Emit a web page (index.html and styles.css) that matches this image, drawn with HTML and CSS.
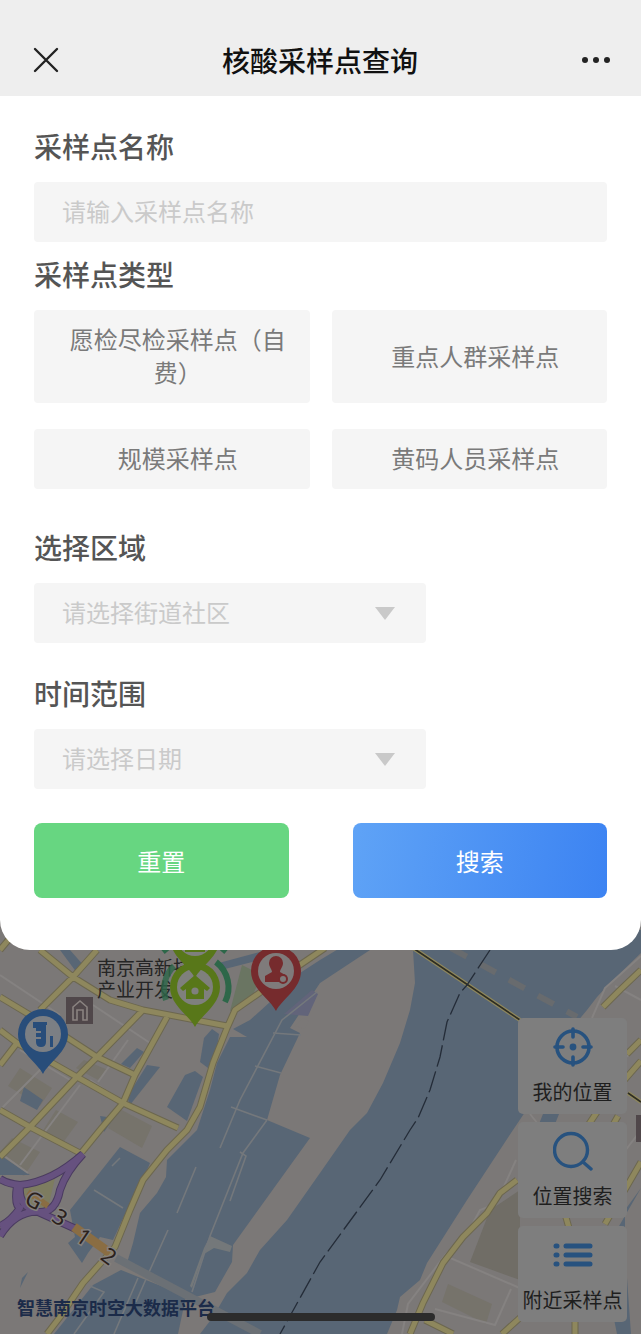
FILE: index.html
```html
<!DOCTYPE html>
<html lang="zh-CN">
<head>
    <meta charset="UTF-8">
    <meta name="viewport" content="width=device-width, initial-scale=1.0">
    <title>核酸采样点查询</title>
    <link rel="stylesheet" href="styles.css">
</head>
<body>
    <header class="navbar">
        <button class="nav-btn" type="button" aria-label="关闭">
            <svg width="26" height="26" viewBox="0 0 26 26" fill="none" stroke="#222" stroke-width="2.4" stroke-linecap="round"><path d="M2 2l22 22M24 2L2 24"/></svg>
        </button>
        <h1>核酸采样点查询</h1>
        <button class="nav-btn" type="button" aria-label="更多">
            <svg width="30" height="8" viewBox="0 0 30 8" fill="#222"><circle cx="4" cy="4" r="3"/><circle cx="15" cy="4" r="3"/><circle cx="26" cy="4" r="3"/></svg>
        </button>
    </header>

    <form class="sheet">
        <div class="field">
            <label class="field-title" for="siteName">采样点名称</label>
            <input class="control" type="text" id="siteName" placeholder="请输入采样点名称">
        </div>

        <div class="field field-types" role="group" aria-labelledby="typeTitle">
            <h2 class="field-title" id="typeTitle">采样点类型</h2>
            <div class="types">
                <button class="type-btn" type="button">愿检尽检采样点（自费）</button>
                <button class="type-btn" type="button">重点人群采样点</button>
                <button class="type-btn" type="button">规模采样点</button>
                <button class="type-btn" type="button">黄码人员采样点</button>
            </div>
        </div>

        <div class="field field-area">
            <label class="field-title" for="area">选择区域</label>
            <div class="select">
                <select class="control" id="area">
                    <option>请选择街道社区</option>
                </select>
                <svg class="arrow" width="20" height="13" viewBox="0 0 20 13"><path d="M0 0h20L10 13z" fill="#c9c9c9"/></svg>
            </div>
        </div>

        <div class="field field-date">
            <label class="field-title" for="date">时间范围</label>
            <div class="select">
                <select class="control" id="date">
                    <option>请选择日期</option>
                </select>
                <svg class="arrow" width="20" height="13" viewBox="0 0 20 13"><path d="M0 0h20L10 13z" fill="#c9c9c9"/></svg>
            </div>
        </div>

        <div class="actions">
            <button class="action reset" type="reset">重置</button>
            <button class="action search" type="button">搜索</button>
        </div>
    </form>

    <main class="map">
        <svg class="map-canvas" viewBox="0 920 641 414" preserveAspectRatio="xMidYMid slice" role="img" aria-label="地图">
            <rect y="920" width="641" height="414" fill="#7b7877"/>

            <!-- blocks -->
            <g fill="#76736b">
                <path d="M20 1068l32 20-12 18-32-20z"/>
                <path d="M118 1108l34 18-10 22-34-20z"/>
                <path d="M12 1138l28 14-16 24-24-12v-12z"/>
                <path d="M56 1110l22 12-16 22-20-12z"/>
                <path d="M84 1060l24 10-10 10-22-12z"/>
                <path d="M490 1210l30-20v90l-50-18z" fill="#706d66"/>
                <path d="M448 1284l44 20-6 20-44-22z"/>
            </g>
            <path d="M242 965l20 10-12 26-20 10z" fill="#6a7562"/>

            <!-- water -->
            <g fill="#586675">
                <path d="M413 930L413 950 415 983 410 1010 400 1043 383 1083 367 1113 350 1130 320 1173 287 1220 260 1250 247 1273 227 1293 213 1317 200 1334H387L397 1310 400 1297 420 1280 427 1263 467 1200 513 1130 560 1060 577 1022 587 1010 597 997 610 983 641 953V930z"/>
                <path d="M345 945L320 960 300 973 280 993 250 1020 233 1029 247 1037 230 1037 217 1063 210 1090 197 1130 167 1160 166 1177 157 1193 140 1213 133 1243 127 1263 145 1275 195 1297 215 1292 232 1262 233 1245 310 1138 267 1120 280 1075 300 1033 290 1028 320 983 370 950z"/>
                <path d="M120 1147l30 16-7 17-10 17-20 43-13-3-12 16-6 10-14-20 7-6-5-27z"/>
                <path d="M93 1285l28-15 65 26-8 38H54z"/>
                <path d="M212 1029l7 5-2 14-9 20-8-6 4-24z"/>
                <path d="M147 1065l13 2-30 38-3-8z"/>
                <path d="M185 1075l10-4 8 6-16 44-20-14z"/>
                <path d="M24 1087l19 13-6 10-17-9z"/>
                <path d="M60 950h10l15 17-8 6z"/>
                <path d="M137 1048l7 4-14 16-9-4z"/>
                <path d="M100 1116l14 2-10 14z"/>
                <path d="M215 964l60-16v8l-54 14z"/>
                <path d="M0 1155l30 20H0z"/>
                <path d="M28 1272l-8 16 2-10z"/>
                <path d="M543 1114h16l-4 10h-16z"/>
                <path d="M641 1188l-16 22v40l6 84h-14l-6-30V1240z"/>
            </g>
            <path d="M312 990l6 4-10 22-24-2z" fill="#62647a"/>
            <path d="M303 1018l6 3-4 8-10-3z" fill="#7b7877"/>
            <path d="M204 1248l6-12 22 10-2 6-16-4-10 6-12 34-2-2z" fill="#74787a"/>

            <!-- dykes and small streets -->
            <g fill="none" stroke="#74787c" stroke-width="1.6">
                <path d="M317 992L282 1020 240 1100 220 1148M273 1033l28 2M255 1066l26 7M231 1107l36 13M267 1120L243 1153 210 1236 192 1292"/>
                <path d="M240 1152l6 4-16 45M196 1167l-19 46M168 1230l-18 40-14 32M94 1190l29 18M120 1158l-8 8M90 1286l14 6-30 42M138 1278l-24 56"/>
            </g>
            <g fill="none" stroke="#858281" stroke-width="2">
                <path d="M0 975l60 40M93 1005l60 40M20 1050l50 30M0 1110l50-50M20 1165l60-80M0 1153l28 20M128 1040l-30 42M90 1080l40 26"/>
                <path d="M592 1018l13-30 36-32M516 1160l-20 44-16 6-14 26-20 18-38 50-6 30M448 1257l74 32M435 1309l60 16 16-36M641 1000l-26-14M530 1114l16 20M600 1080l41-36M641 1130l-20 26"/>
            </g>

            <!-- roads -->
            <g class="roads">
                <g stroke="#6c674f" stroke-width="7"><use href="#roads"/></g>
                <g stroke="#8e875d" stroke-width="5"><use href="#roads"/></g>
            </g>
            <defs>
                <path id="roads" d="M325 948L285 975 235 1010 227 1028 213 1063 200 1107 187 1130 167 1150 143 1180 130 1210 115 1247 83 1283 60 1317 47 1334M40 950L73 977 110 1000 143 1010 227 1026M97 950L73 977 40 1010M0 997L60 1033 97 1057 135 1075M0 950l10-12M143 1010L97 1057 77 1077 30 1127 0 1157M167 1017L135 1075 123 1103 100 1130 82 1152M0 1030L17 1043 77 1077 123 1103 178 1128M0 1110L30 1127 80 1153M0 1065L17 1043M641 970L620 990 603 1007M517 1180L500 1193 487 1213 463 1237 443 1263 423 1303 410 1334M425 1320l28 14M641 1040l-14 14M620 1085l21-24M641 1162l-36 62M565 1214l4 14M522 1316l-20 18M575 1316v18M585 1130l12-18M618 1116l-8 14"/>
            </defs>
            <path d="M116 1258l144 76" stroke="#6b7075" stroke-width="8"/>
            <path d="M413 948L520 1020M628 1093l13 9" stroke="#8e875d" stroke-width="4"/>
            <path d="M413 948L520 1020M628 1093l13 9" stroke="#2e2d22" stroke-width="1.6"/>
            <path d="M451 948L577 1017" stroke="#686b6e" stroke-width="6" stroke-dasharray="18 15"/>
            <path d="M490 950L467 985 460 993 447 1022 440 1057 430 1090 418 1118 410 1130 380 1180 320 1262 280 1334" fill="none" stroke="#242c38" stroke-width="1.3" stroke-dasharray="22 5"/>

            <!-- interchange -->
            <path d="M84 1156L56 1174 48 1208 22 1206 20 1186z" fill="#7d7c60"/>
            <g fill="none" stroke-linejoin="round">
                <g stroke="#4a3b60" stroke-width="8"><use href="#ramps"/></g>
                <g stroke="#66517f" stroke-width="6"><use href="#ramps"/></g>
                <path d="M28 1192l20 14" stroke="#8a6d43" stroke-width="6"/>
                <path d="M74 1227l36 26" stroke="#8a6d43" stroke-width="9"/>
            </g>
            <defs>
                <path id="ramps" d="M83 1154Q52 1182 20 1185 8 1184 0 1179M83 1154Q66 1172 60 1190 56 1212 40 1212 16 1210 0 1236M17 1186Q14 1206 20 1208 10 1222 0 1226M20 1186Q18 1206 36 1211L76 1229"/>
            </defs>

            <g class="route">
                <text x="34" y="1208" transform="rotate(28 34 1200)">G</text>
                <text x="60" y="1225" transform="rotate(32 60 1217)">3</text>
                <text x="84" y="1245" transform="rotate(34 84 1237)">1</text>
                <text x="109" y="1264" transform="rotate(36 109 1256)">2</text>
            </g>

            <!-- landmark badges -->
            <rect x="66" y="997" width="27" height="27" fill="#50474a"/>
            <path d="M73 1020v-13l7-6 7 6v13h-4v-10h-6v10z" fill="none" stroke="#8a8380" stroke-width="1.6"/>
            <rect x="636" y="1115" width="5" height="27" fill="#50474a"/>

            <text class="place"><tspan x="97" y="975">南京高新技</tspan><tspan x="97" y="997">产业开发</tspan></text>

            <!-- sampling site pins -->
            <defs>
                <path id="pin" d="M0 40C-6 28-25 18-25 0a25 25 0 0 1 50 0C25 18 6 28 0 40z"/>
            </defs>
            <g fill="none" stroke="#2d6749" stroke-width="6">
                <path d="M174 966a32 32 0 0 0-8 34" stroke-opacity="0.8"/>
                <path d="M216 962a32 32 0 0 1 9 40"/>
                <path d="M162 946l5 6M227 946l-5 6"/>
            </g>
            <g transform="translate(195 987)">
                <use href="#pin" fill="#587719"/>
                <circle r="18" fill="#7f807d"/>
                <path d="M0-12l15 13-3 3-3-2v10h-18V2l-3 2-3-3z" fill="#587719"/>
                <circle cy="4" r="3.6" fill="#7f807d"/>
            </g>
            <g transform="translate(195 938)">
                <use href="#pin" fill="#587719"/>
                <circle r="18" fill="#7f807d"/>
                <path d="M-10 8h20v6h-20z" fill="#587719"/>
            </g>
            <g transform="translate(276 971)">
                <use href="#pin" fill="#762b2d"/>
                <circle r="18" fill="#7f7b7b"/>
                <path d="M0-15a7 7 0 0 1 7 7c0 4-3 6-3 9l7 4v6h-22V5l7-4c0-3-3-5-3-9a7 7 0 0 1 7-7z" fill="#762b2d"/>
                <circle cx="7" cy="8" r="4" fill="#7f7b7b" stroke="#762b2d" stroke-width="2"/>
            </g>
            <g transform="translate(43 1034)">
                <use href="#pin" fill="#284d7a"/>
                <circle r="18" fill="#7b7f84"/>
                <path d="M-10-12H4v3h-1V8q0 5-5 5t-5-5V5h5V3h-5V-1h5V-3h-5V-6h-3zM7 2h3v11H7z" fill="#284d7a"/>
            </g>

            <text class="brand" x="17" y="1315">智慧南京时空大数据平台</text>
        </svg>

        <div class="tools">
            <button class="tool" type="button">
                <svg width="40" height="40" viewBox="0 0 40 40" fill="none" stroke="#27527f" stroke-width="3.6" stroke-linecap="round"><circle cx="20" cy="20" r="16"/><path d="M20 2v8M20 30v8M2 20h8M30 20h8"/><circle cx="20" cy="20" r="3.4" fill="#27527f" stroke="none"/></svg>
                我的位置
            </button>
            <button class="tool" type="button">
                <svg width="40" height="40" viewBox="0 0 40 40" fill="none" stroke="#27527f" stroke-width="3.4" stroke-linecap="round"><circle cx="18" cy="19" r="16.5"/><path d="M30 31l8 7"/></svg>
                位置搜索
            </button>
            <button class="tool" type="button">
                <svg width="40" height="40" viewBox="0 0 40 40" fill="none" stroke="#27527f" stroke-width="5" stroke-linecap="round"><path d="M13 11h24M13 20h24M13 29h24M3 11h1M3 20h1M3 29h1"/></svg>
                附近采样点
            </button>
        </div>
        <div class="home-bar"></div>
    </main>
</body>
</html>
```

FILE: styles.css
```css
* {
    box-sizing: border-box;
}
body {
    margin: 0;
    min-height: 100vh;
    display: flex;
    flex-direction: column;
    font-family: "Noto Sans CJK SC", sans-serif;
    background: #7b7877;
}
button, input, select {
    font-family: inherit;
    border: none;
}
button {
    cursor: pointer;
}

/* top bar */
.navbar {
    display: flex;
    align-items: center;
    justify-content: space-between;
    height: 96px;
    padding: 24px 30px 0 33px;
    background: #eee;
}
.navbar h1 {
    margin: 0;
    font-size: 28px;
    font-weight: 500;
    line-height: 40px;
    color: #111;
}
.nav-btn {
    display: flex;
    padding: 0;
    background: none;
}

/* search form */
.sheet {
    position: relative;
    z-index: 1;
    padding: 30px 34px 52px;
    background: #fff;
    border-radius: 0 0 30px 30px;
}
.field-title {
    display: block;
    margin: 0 0 16px;
    font-size: 28px;
    font-weight: 500;
    line-height: 40px;
    color: #555;
}
.control {
    display: block;
    width: 100%;
    height: 60px;
    padding: 0 28px 3px;
    border-radius: 4px;
    background: #f5f5f5;
    font-size: 24px;
    color: #cacaca;
    appearance: none;
}
.control::placeholder {
    color: #cacaca;
}
.field-types {
    margin-top: 12px;
}
.field-area {
    margin-top: 38px;
}
.field-date {
    margin-top: 30px;
}
.types {
    display: grid;
    grid-template-columns: 1fr 1fr;
    gap: 26px 22px;
}
.type-btn {
    min-height: 60px;
    padding: 12px 16px 15px 28px;
    border-radius: 4px;
    background: #f5f5f5;
    font-size: 24px;
    line-height: 33px;
    color: #7a7a7a;
}
.select {
    display: grid;
    align-items: center;
    width: 100%;
    max-width: 392px;
}
.select > * {
    grid-area: 1 / 1;
}
.arrow {
    justify-self: end;
    margin-right: 31px;
    pointer-events: none;
}
.actions {
    display: flex;
    gap: 64px;
    margin-top: 34px;
}
.action {
    flex: 1;
    height: 75px;
    border-radius: 8px;
    font-size: 24px;
    color: #fff;
}
.reset {
    background: #67d681;
}
.search {
    background: linear-gradient(100deg, #5fa3f6, #3c83f2);
}

/* dimmed map under the form */
.map {
    position: relative;
    flex: 1;
    min-height: 414px;
    margin-top: -30px;
    overflow: hidden;
}
.map-canvas {
    position: absolute;
    inset: 0;
    width: 100%;
    height: 100%;
}
.roads {
    fill: none;
    stroke-linejoin: round;
}
.place {
    font-size: 19px;
    fill: #252525;
}
.route {
    font-family: "Noto Sans", sans-serif;
    font-size: 22px;
    text-anchor: middle;
    fill: #2b211c;
    stroke: #83807e;
    stroke-width: 3px;
    paint-order: stroke;
}
.brand {
    font-size: 18px;
    font-weight: 700;
    fill: #1b2b49;
}
.tools {
    position: absolute;
    right: 14px;
    bottom: 12px;
    display: flex;
    flex-direction: column;
    gap: 8px;
}
.tool {
    display: flex;
    flex-direction: column;
    align-items: center;
    gap: 11px;
    width: 109px;
    padding: 9px 0 8px;
    border-radius: 5px;
    background: #7e7e7e;
    font-size: 20px;
    line-height: 28px;
    color: #1e1e1e;
}
.home-bar {
    position: absolute;
    bottom: 13px;
    left: 50%;
    width: 228px;
    height: 8px;
    border-radius: 4px;
    background: #2c2c2c;
    transform: translateX(-50%);
}
```
